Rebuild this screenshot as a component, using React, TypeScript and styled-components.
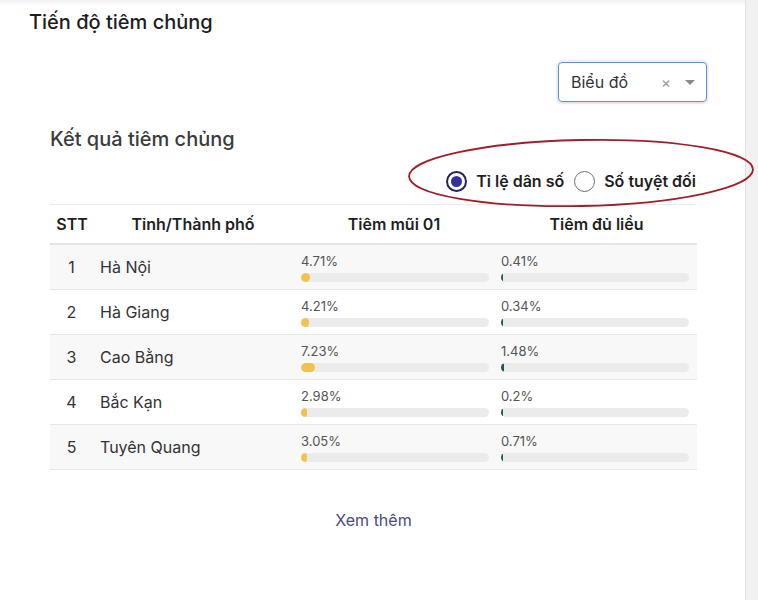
import React from "react";
import styled, { createGlobalStyle } from "styled-components";

const Global = createGlobalStyle`
  html, body { margin: 0; padding: 0; background: #f1f1f1; }
  body { font-family: Inter, "Noto Sans", "Liberation Sans", sans-serif; color: #222; }
  * { box-sizing: border-box; }
`;

const Page = styled.div`
  display: flex;
  min-height: 600px;
`;

const Card = styled.div`
  width: 746px;
  min-height: 600px;
  background: linear-gradient(#f1f1f1, #ffffff 6px);
  border-right: 1px solid #e3e3e3;
  display: flex;
  flex-direction: column;
`;

const Strip = styled.div`
  flex: 1;
  background: #f1f1f1;
`;

const Title = styled.h1`
  margin: 0;
  padding: 10px 0 0 29px;
  font-size: 20px;
  line-height: 24px;
  font-weight: 500;
  color: #1d1d1d;
`;

const Toolbar = styled.div`
  display: flex;
  justify-content: flex-end;
  padding: 28px 38px 0 0;
`;

const Select = styled.div`
  width: 149px;
  height: 40px;
  border: 1px solid #6a8ec8;
  border-radius: 4px;
  box-shadow: 0 0 0 2px rgba(120, 160, 220, 0.12), 0 1px 3px rgba(0, 0, 0, 0.12);
  display: flex;
  align-items: center;
  padding: 0 11px 0 12px;
  font-size: 16px;
  color: #333;
`;

const SelectValue = styled.span`
  flex: 1;
`;

const Clear = styled.span`
  color: #9a9a9a;
  font-size: 15px;
  margin-right: 14px;
`;

const Caret = styled.span`
  width: 0;
  height: 0;
  border-left: 5px solid transparent;
  border-right: 5px solid transparent;
  border-top: 5px solid #8a8a8a;
`;

const Content = styled.section`
  padding: 25px 48px 0 50px;
  display: flex;
  flex-direction: column;
`;

const Subtitle = styled.h2`
  margin: 0;
  font-size: 20px;
  line-height: 24px;
  font-weight: 500;
  color: #3b3b3b;
`;

const RadioRow = styled.div`
  position: relative;
  display: flex;
  justify-content: flex-end;
  align-items: center;
  gap: 10px;
  margin-top: 19px;
  padding-right: 1px;
  height: 22px;
`;

const RadioLabel = styled.label`
  display: flex;
  align-items: center;
  gap: 9px;
  font-size: 16px;
  font-weight: 600;
  color: #1f1f1f;
`;

const RadioDot = styled.span<{ $checked?: boolean }>`
  width: 21px;
  height: 21px;
  border-radius: 50%;
  border: ${(p) => (p.$checked ? "2px solid #23225e" : "1.5px solid #6f6f6f")};
  display: flex;
  align-items: center;
  justify-content: center;
  &::after {
    content: "";
    width: 11px;
    height: 11px;
    border-radius: 50%;
    background: ${(p) => (p.$checked ? "#34329a" : "transparent")};
  }
`;

const Annotation = styled.svg`
  position: absolute;
  left: 356px;
  top: -33px;
  width: 350px;
  height: 72px;
  overflow: visible;
  pointer-events: none;
`;

const Table = styled.table`
  margin-top: 12px;
  width: 647px;
  border-collapse: collapse;
  table-layout: fixed;
  border-top: 1px solid #ececec;
`;

const Th = styled.th`
  height: 39px;
  font-size: 16px;
  font-weight: 600;
  color: #1f1f1f;
  text-align: center;
  border-bottom: 2px solid #e4e4e4;
  padding: 0 0 0 4px;
`;

const Tr = styled.tr<{ $odd: boolean }>`
  background: ${(p) => (p.$odd ? "#f8f8f8" : "#ffffff")};
  border-bottom: 1px solid #e6e6e6;
`;

const NumCell = styled.td`
  height: 44.5px;
  text-align: center;
  font-size: 16px;
  color: #333;
  padding: 0 0 0 3px;
`;

const NameCell = styled.td`
  font-size: 16px;
  color: #333;
  padding: 0 0 0 10px;
`;

const BarCell = styled.td`
  padding: 8px 0 7px 9px;
  vertical-align: top;
`;

const Pct = styled.div`
  font-size: 13px;
  line-height: 16px;
  color: #555;
`;

const Track = styled.div`
  margin-top: 4px;
  width: 188px;
  height: 9px;
  border-radius: 5px;
  background: #ebebeb;
  overflow: hidden;
`;

const Fill = styled.div<{ $color: string }>`
  height: 100%;
  border-radius: 5px;
  background: ${(p) => p.$color};
`;

const More = styled.a`
  align-self: center;
  margin-top: 40px;
  font-size: 16px;
  color: #4b4a7c;
  text-decoration: none;
  cursor: pointer;
`;

const rows = [
  { name: "Hà Nội", a: 4.71, b: 0.41 },
  { name: "Hà Giang", a: 4.21, b: 0.34 },
  { name: "Cao Bằng", a: 7.23, b: 1.48 },
  { name: "Bắc Kạn", a: 2.98, b: 0.2 },
  { name: "Tuyên Quang", a: 3.05, b: 0.71 },
];

const Bar = ({ value, color }: { value: number; color: string }) => (
  <>
    <Pct>{value}%</Pct>
    <Track>
      <Fill $color={color} style={{ width: `max(${value}%, 2px)` }} />
    </Track>
  </>
);

export default function App() {
  return (
    <>
      <Global />
      <Page>
        <Card>
          <Title>Tiến độ tiêm chủng</Title>
          <Toolbar>
            <Select>
              <SelectValue>Biểu đồ</SelectValue>
              <Clear>×</Clear>
              <Caret />
            </Select>
          </Toolbar>
          <Content>
            <Subtitle>Kết quả tiêm chủng</Subtitle>
            <RadioRow>
              <RadioLabel>
                <RadioDot $checked />
                Tỉ lệ dân số
              </RadioLabel>
              <RadioLabel>
                <RadioDot />
                Số tuyệt đối
              </RadioLabel>
              <Annotation viewBox="0 0 350 72">
                <ellipse
                  cx="175"
                  cy="36"
                  rx="172"
                  ry="33"
                  fill="none"
                  stroke="#9e1f2c"
                  strokeWidth="1.8"
                  transform="rotate(-1.2 175 36)"
                />
              </Annotation>
            </RadioRow>
            <Table>
              <colgroup>
                <col style={{ width: 40 }} />
                <col style={{ width: 202 }} />
                <col style={{ width: 200 }} />
                <col style={{ width: 205 }} />
              </colgroup>
              <thead>
                <tr>
                  <Th>STT</Th>
                  <Th>Tỉnh/Thành phố</Th>
                  <Th>Tiêm mũi 01</Th>
                  <Th>Tiêm đủ liều</Th>
                </tr>
              </thead>
              <tbody>
                {rows.map((r, i) => (
                  <Tr key={r.name} $odd={i % 2 === 0}>
                    <NumCell>{i + 1}</NumCell>
                    <NameCell>{r.name}</NameCell>
                    <BarCell>
                      <Bar value={r.a} color="#f2c24f" />
                    </BarCell>
                    <BarCell>
                      <Bar value={r.b} color="#1d5c55" />
                    </BarCell>
                  </Tr>
                ))}
              </tbody>
            </Table>
            <More>Xem thêm</More>
          </Content>
        </Card>
        <Strip />
      </Page>
    </>
  );
}
